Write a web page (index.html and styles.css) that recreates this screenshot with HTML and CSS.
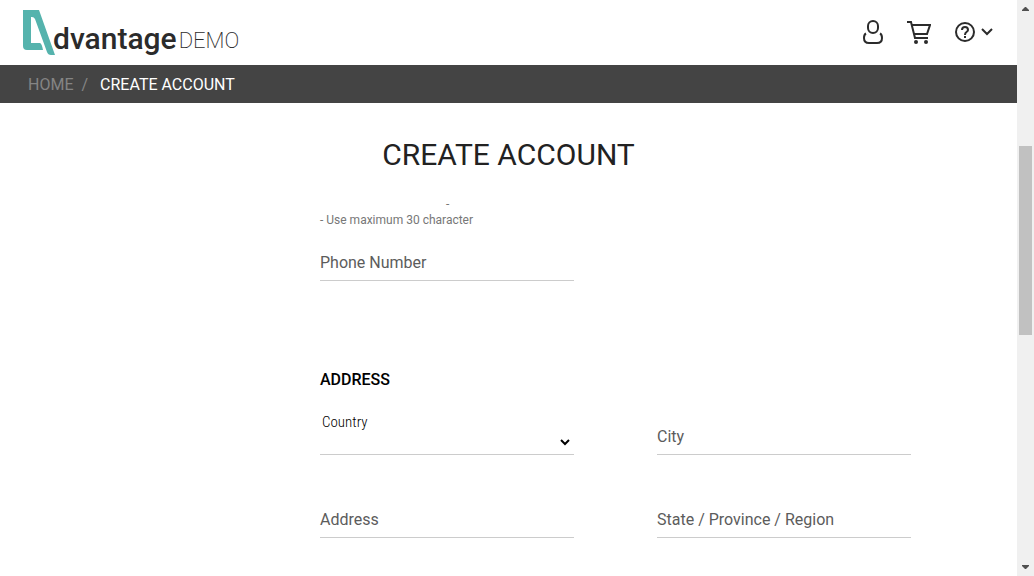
FILE: index.html
```html
<!DOCTYPE html>
<html lang="en">
<head>
<meta charset="utf-8">
<meta name="viewport" content="width=device-width, initial-scale=1">
<title>Create Account - Advantage Demo</title>
<link rel="stylesheet" href="styles.css">
</head>
<body>
<div class="page">
  <header class="header">
    <a class="logo" href="#">
      <svg class="logo-mark" width="33" height="46" viewBox="0 0 33 46" aria-hidden="true"><path fill="#55b3ad" fill-rule="evenodd" d="M0 0H16L32 45H28Q25 45 24 42L12 9Q11 7 9 7H8V33H17Q19 34 20 40H4Q0 40 0 36Z"/></svg>
      <span class="logo-name">dvantage</span><span class="logo-demo">DEMO</span>
    </a>
    <div class="tools">
      <button class="tool" type="button" aria-label="User"><svg width="20" height="26" viewBox="0 0 20 26"><g fill="none" stroke="#2b2b2b" stroke-width="2"><rect x="5" y="2" width="10" height="12" rx="5"/><path d="M3 14.500C1 15.500 1 17 1 19Q1 24 6 24H14Q19 24 19 19C19 17 19 15.500 17 14.500"/></g></svg></button>
      <button class="tool" type="button" aria-label="Cart"><svg width="24" height="24" viewBox="0 0 24 24"><g fill="none" stroke="#2b2b2b" stroke-width="2"><path d="M0 2H4L8 18H21M5 5H23L20 14H7"/></g><circle cx="9" cy="22" r="2" fill="#2b2b2b"/><circle cx="19" cy="22" r="2" fill="#2b2b2b"/></svg></button>
      <button class="tool" type="button" aria-label="Help"><svg width="38" height="20" viewBox="0 0 38 20"><g fill="none" stroke="#2b2b2b" stroke-width="2"><circle cx="10" cy="10" r="9"/><path d="M7 8Q7 5 10 5T13 8Q13 9 11.500 10T10 13M27 7L32 12L37 7"/></g><rect x="9" y="14" width="2" height="2" fill="#2b2b2b"/></svg></button>
    </div>
  </header>
  <nav class="crumbs" aria-label="Breadcrumb"><a class="crumb-home" href="#">HOME</a><span class="crumb-sep">/</span><span class="crumb-current">CREATE ACCOUNT</span></nav>
  <main class="main">
    <h1 class="title">CREATE ACCOUNT</h1>
    <form class="form">
      <div class="hints">
        <p class="hint hint-tail">-</p>
        <p class="hint">- Use maximum 30 character</p>
      </div>
      <div class="field phone"><label class="label" for="phone">Phone Number</label><input class="control" id="phone" type="tel"></div>
      <h2 class="section">ADDRESS</h2>
      <div class="field country"><label class="country-label" for="country">Country</label><select class="control select" id="country"><option></option></select><svg class="caret" width="10" height="7" viewBox="0 0 10 7" aria-hidden="true"><path d="M1 1L5 5L9 1" fill="none" stroke="#000" stroke-width="2"/></svg></div>
      <div class="field"><label class="label" for="city">City</label><input class="control" id="city" type="text"></div>
      <div class="field"><label class="label" for="address">Address</label><input class="control" id="address" type="text"></div>
      <div class="field"><label class="label" for="state">State / Province / Region</label><input class="control" id="state" type="text"></div>
    </form>
  </main>
</div>
<div class="scrollbar" aria-hidden="true">
  <svg class="arrow" width="7" height="4" viewBox="0 0 7 4"><path d="M3 0H4L7 3V4H0V3Z" fill="#505050"/></svg>
  <div class="track"><div class="thumb"></div></div>
  <svg class="arrow" width="7" height="4" viewBox="0 0 7 4"><path d="M0 0H7V1L4 4H3L0 1Z" fill="#505050"/></svg>
</div>
</body>
</html>
```
FILE: styles.css
```css
* { box-sizing: border-box; }

body {
  margin: 0;
  height: 100vh;
  display: grid;
  grid-template-columns: minmax(0, 1fr) 17px;
  overflow: hidden;
  background: #fff;
  color: #222;
  font-family: Roboto, "Liberation Sans", sans-serif;
  font-size: 16px;
  line-height: 20px;
}

.page { overflow: hidden; }

.header {
  display: flex;
  justify-content: space-between;
  height: 65px;
  padding: 0 24px 0 23px;
}

.logo {
  display: flex;
  align-items: flex-start;
  padding-top: 10px;
  color: #2b2b2b;
  text-decoration: none;
}
.logo-mark { margin-right: -3px; }
.logo-name {
  padding-top: 12px;
  font-size: 30px;
  line-height: 34px;
  font-weight: 500;
}
.logo-demo {
  padding: 17px 0 0 2px;
  font-size: 22px;
  line-height: 28px;
  font-weight: 200;
}

.tools {
  display: flex;
  align-items: center;
  gap: 24px;
  padding-bottom: 1px;
}
.tool {
  display: flex;
  padding: 0;
  border: 0;
  background: none;
}

.crumbs {
  display: flex;
  height: 38px;
  padding: 10px 28px 8px;
  background: #444;
  color: #fff;
}
.crumb-home,
.crumb-sep { color: #858585; text-decoration: none; }
.crumb-sep { padding: 0 12px 0 8px; }

.title {
  margin: 0;
  padding-top: 34px;
  font-size: 30px;
  line-height: 36px;
  font-weight: 400;
  text-align: center;
}

.form {
  display: grid;
  grid-template-columns: 1fr 1fr;
  column-gap: 83px;
  padding: 23px 106px 0 320px;
}

.hints,
.phone,
.section { grid-column: 1 / -1; }
.hint {
  margin: 0;
  font-size: 12px;
  line-height: 16px;
  color: #777;
}
.hint-tail { padding-left: 126px; }

.field {
  display: grid;
  height: 83px;
  align-content: start;
}
.phone { width: calc(50% - 42px); margin-top: 16px; }
.label,
.control { grid-area: 1 / 1; }
.label {
  z-index: 1;
  padding-top: 9px;
  color: #5c5c5c;
  pointer-events: none;
}
.control {
  width: 100%;
  height: 37px;
  padding: 0;
  border: 0;
  border-bottom: 1px solid #ccc;
  border-radius: 0;
  background: none;
  font: inherit;
  outline: 0;
}

.section {
  margin: 43px 0 28px;
  font-size: 16px;
  line-height: 20px;
  font-weight: 500;
  color: #000;
}

.country-label {
  grid-area: 1 / 1;
  margin: -6px 0 0 2px;
  font-family: "Roboto Condensed", Roboto, sans-serif;
  font-size: 15px;
  font-weight: 300;
  color: #000;
}
.select { appearance: none; }
.caret {
  grid-area: 1 / 1;
  place-self: end;
  margin: 0 4px 9px 0;
  pointer-events: none;
}

.scrollbar {
  display: flex;
  flex-direction: column;
  align-items: center;
  padding: 7px 0;
  background: #f0f0f0;
}
.arrow { flex: none; }
.track {
  flex: 1;
  width: 13px;
  padding-top: 135px;
}
.thumb {
  height: 35%;
  min-height: 189px;
  background: #c1c1c1;
}
```
